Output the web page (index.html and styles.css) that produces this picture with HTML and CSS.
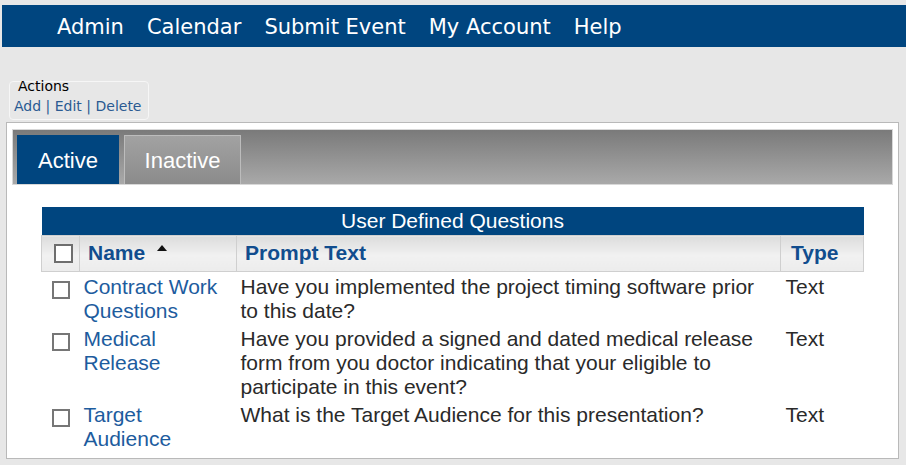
FILE: index.html
```html
<!DOCTYPE html>
<html>
<head>
<meta charset="utf-8">
<link rel="stylesheet" href="styles.css">
</head>
<body>
<nav class="topnav">
  <a href="#">Admin</a>
  <a href="#">Calendar</a>
  <a href="#">Submit Event</a>
  <a href="#">My Account</a>
  <a href="#">Help</a>
</nav>
<div class="actions">
  <div class="actions-title">Actions</div>
  <div class="actions-links"><a href="#">Add</a> | <a href="#">Edit</a> | <a href="#">Delete</a></div>
</div>
<div class="panel">
  <div class="tabbar">
    <div class="tab tab-active">Active</div>
    <div class="tab tab-inactive">Inactive</div>
  </div>
  <table class="grid">
    <colgroup>
      <col class="col-check">
      <col class="col-name">
      <col class="col-prompt">
      <col class="col-type">
    </colgroup>
    <thead>
      <tr><th colspan="4" class="grid-title">User Defined Questions</th></tr>
      <tr class="grid-head">
        <th class="h-check"><span class="box"></span></th>
        <th>Name <span class="sort"></span></th>
        <th>Prompt Text</th>
        <th class="h-type">Type</th>
      </tr>
    </thead>
    <tbody>
      <tr>
        <td class="c-check"><span class="box"></span></td>
        <td><a href="#">Contract Work Questions</a></td>
        <td>Have you implemented the project timing software prior to this date?</td>
        <td class="c-type">Text</td>
      </tr>
      <tr>
        <td class="c-check"><span class="box"></span></td>
        <td><a href="#">Medical Release</a></td>
        <td>Have you provided a signed and dated medical release form from you doctor indicating that your eligible to participate in this event?</td>
        <td class="c-type">Text</td>
      </tr>
      <tr>
        <td class="c-check"><span class="box"></span></td>
        <td><a href="#">Target Audience</a></td>
        <td>What is the Target Audience for this presentation?</td>
        <td class="c-type">Text</td>
      </tr>
    </tbody>
  </table>
</div>
</body>
</html>
```
FILE: styles.css
```css
html, body {
  margin: 0;
  padding: 0;
}
body {
  background: #e7e7e7;
  font-family: "DejaVu Sans", Verdana, sans-serif;
  width: 906px;
  height: 465px;
  overflow: hidden;
}
a { text-decoration: none; }

.topnav {
  margin: 5px 0 0 2px;
  height: 42px;
  background: #00457f;
  display: flex;
  align-items: center;
  gap: 23px;
  padding: 3px 0 0 55px;
  box-sizing: border-box;
}
.topnav a {
  color: #fff;
  font-size: 21px;
  line-height: 1;
}

.actions {
  margin: 34px 0 0 9px;
  width: 140px;
  height: 39px;
  box-sizing: border-box;
  border: 1px solid #f6f6f6;
  border-radius: 4px;
  padding: 0 0 0 5px;
  font-size: 14px;
}
.actions-title {
  color: #000;
  padding-left: 3px;
  line-height: 14px;
  margin-top: -3px;
}
.actions-links {
  margin-left: -1px;
  margin-top: 3px;
  line-height: 20px;
  color: #2a5a92;
}
.actions-links a { color: #2a5a92; }

.panel {
  margin: 2px 0 0 6px;
  width: 893px;
  height: 337px;
  box-sizing: border-box;
  background: #fff;
  border: 1px solid #b9b9b9;
  padding: 6px 0 0 5px;
}
.tabbar {
  width: 881px;
  height: 56px;
  box-sizing: border-box;
  background: linear-gradient(#7a7a7a, #a9a9a9);
  border: 1px solid #d8d8d8;
  display: flex;
  align-items: flex-end;
  gap: 5px;
  padding-left: 4px;
}
.tab {
  height: 49px;
  box-sizing: border-box;
  display: flex;
  align-items: center;
  justify-content: center;
  color: #fff;
  font-family: "Liberation Sans", Arial, sans-serif;
  font-size: 22px;
}
.tab-active {
  width: 102px;
  background: #00457f;
  padding-top: 2px;
}
.tab-inactive {
  width: 117px;
  background: linear-gradient(#a2a2a2, #8b8b8b);
  border: 1px solid #bcbcbc;
  border-bottom: none;
  padding-top: 2px;
}

.grid {
  margin: 22px 0 0 29px;
  width: 822px;
  table-layout: fixed;
  border-collapse: collapse;
  font-family: "Liberation Sans", Arial, sans-serif;
  font-size: 21px;
  color: #2a2a2a;
}
.col-check { width: 38px; }
.col-name { width: 157px; }
.col-prompt { width: 544px; }
.col-type { width: 83px; }

.grid-title {
  background: #00457f;
  color: #fff;
  font-weight: normal;
  font-size: 21px;
  height: 28px;
  padding: 0;
  line-height: 28px;
  text-align: center;
}
.grid-head th {
  height: 36px;
  box-sizing: border-box;
  background: linear-gradient(#dcdcdc, #f1f1f1 55%, #ececec);
  border: 1px solid #cfcfcf;
  color: #114d8e;
  font-weight: bold;
  font-size: 21px;
  text-align: left;
  padding: 0 0 2px 8px;
  vertical-align: middle;
  white-space: nowrap;
}
.grid-head th.h-check { padding: 0 0 0 12px; }
.grid-head th.h-type { padding-left: 10px; }

.sort {
  display: inline-block;
  width: 0;
  height: 0;
  border-left: 5px solid transparent;
  border-right: 5px solid transparent;
  border-bottom: 6px solid #111;
  margin-left: 6px;
  vertical-align: 9px;
}

.box {
  display: block;
  width: 18px;
  height: 18px;
  box-sizing: border-box;
  border: 2px solid #767676;
  background: #fff;
}
.grid-head .box {
  width: 19px;
  height: 19px;
  border-color: #6e6e6e;
}

.grid tbody td {
  vertical-align: top;
  line-height: 24px;
  padding: 3px 4px 1px 4px;
}
.grid tbody td.c-check { padding: 9px 0 0 10px; }
.grid tbody td.c-type { padding-left: 5px; }
.grid tbody td a { color: #1d5c9e; }
```
